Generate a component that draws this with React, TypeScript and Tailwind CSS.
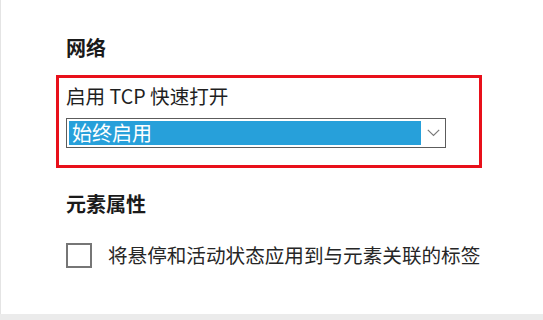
import React from "react";

export default function App() {
  const font = { fontFamily: '"Noto Sans CJK SC", "Noto Sans", sans-serif' };
  return (
    <div className="w-[543px] h-[320px] flex flex-col bg-white overflow-hidden" style={font}>
      <div className="flex-1 flex flex-col border-l border-[#e4e4e4] pl-[55px] pt-[34px]">
        <div className="pl-[10px] text-[20px] leading-[28px] font-bold text-[#1a1a1a]">网络</div>
        <div className="mt-[13px] w-[426px] border-[3px] border-[#e8101a] pl-[7px] pt-[4px] pb-[17px]">
          <div className="text-[19.6px] leading-[28px] text-[#1f1f1f]">启用 TCP 快速打开</div>
          <div className="mt-[8px] w-[380px] h-[30px] border border-[#5c5c5c] flex bg-white">
            <div className="flex-1 m-[2px] mr-0 bg-[#27a0da] flex items-center pl-[3px] text-[20px] leading-[26px] text-white">
              始终启用
            </div>
            <div className="w-[24px] flex items-center justify-center">
              <svg width="13" height="8" viewBox="0 0 13 8">
                <path d="M0.8 0.8 L6.5 6.5 L12.2 0.8" fill="none" stroke="#7a7a7a" strokeWidth="1.2" />
              </svg>
            </div>
          </div>
        </div>
        <div className="mt-[22px] pl-[10px] text-[20px] leading-[28px] font-bold text-[#1a1a1a]">元素属性</div>
        <div className="mt-[23px] pl-[10px] flex items-center">
          <div className="w-[26px] h-[25px] border-2 border-[#767676] bg-white" />
          <div className="ml-[16px] text-[19.6px] leading-[28px] text-[#262626]">将悬停和活动状态应用到与元素关联的标签</div>
        </div>
      </div>
      <div className="h-[6px] bg-[#ebebeb]" />
    </div>
  );
}
